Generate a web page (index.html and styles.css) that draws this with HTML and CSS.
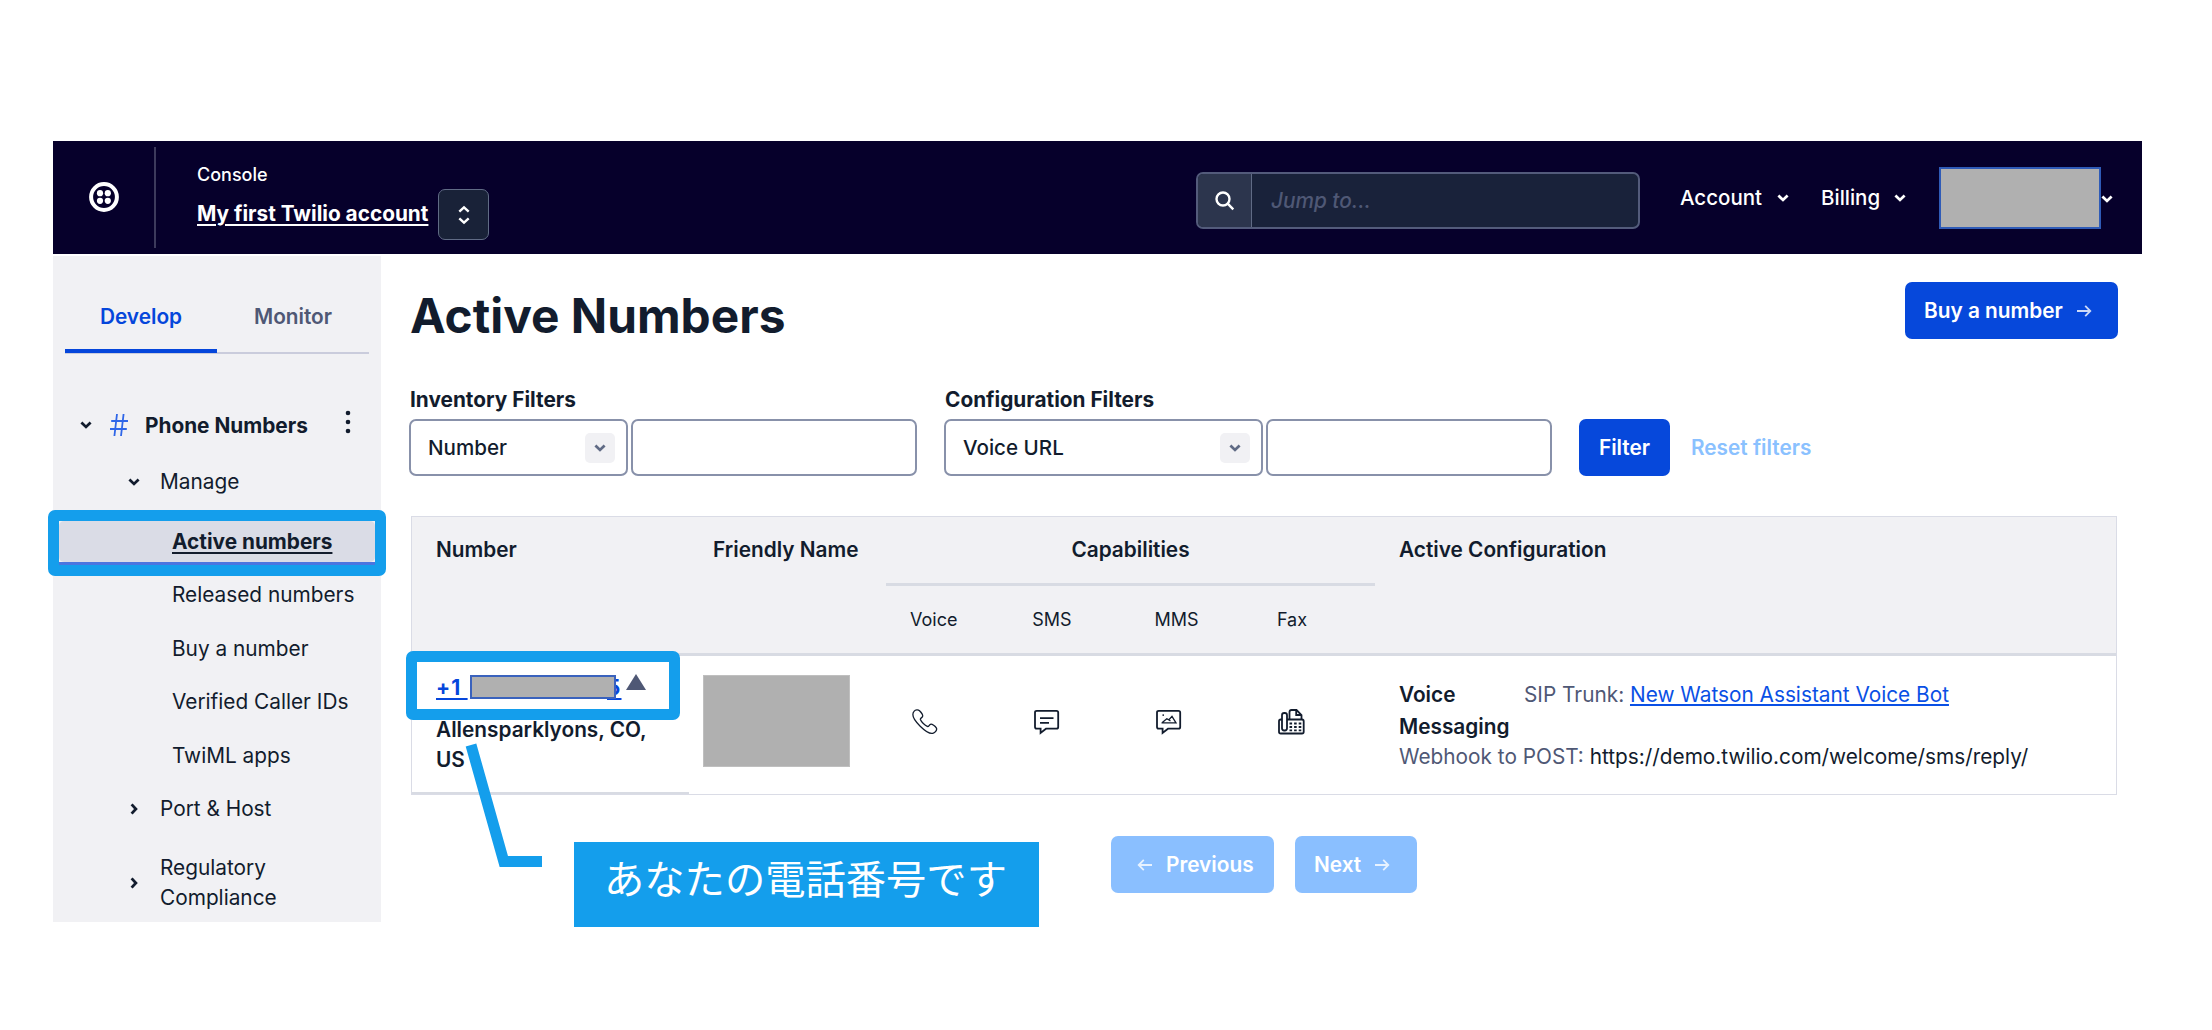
FILE: index.html
```html
<!DOCTYPE html>
<html lang="ja">
<head>
  <meta charset="UTF-8">
  <meta name="viewport" content="width=device-width, initial-scale=1.0">
  <title>Active Numbers</title>
  <link rel="stylesheet" href="styles.css">
</head>
<body>
  <!-- shared chevron and arrow shapes -->
  <svg class="sprite">
    <symbol id="chevron-down" viewBox="0 0 14 14"><path d="M2.4 4.6 L7 8.9 L11.6 4.6"/></symbol>
    <symbol id="chevron-right" viewBox="0 0 14 14"><path d="M4.6 2.4 L8.9 7 L4.6 11.6"/></symbol>
    <symbol id="arrow" viewBox="0 0 16 14"><path d="M1 7 H14 M9.2 1.9 L14.3 7 L9.2 12.1"/></symbol>
  </svg>

  <div class="console">
    <header class="topbar">
      <div class="logo">
        <svg width="30" height="30" viewBox="0 0 30 30">
          <circle cx="15" cy="15" r="12.9" fill="none" stroke="#fff" stroke-width="4"/>
          <g fill="#fff"><circle cx="11" cy="11.2" r="3.1"/><circle cx="18.8" cy="11.2" r="3.1"/><circle cx="11" cy="18.8" r="3.1"/><circle cx="18.8" cy="18.8" r="3.1"/></g>
        </svg>
      </div>
      <div class="account">
        <span class="account-label">Console</span>
        <a class="account-name">My first Twilio account</a>
      </div>
      <button class="switcher">
        <svg width="14" height="20" viewBox="0 0 14 20"><path d="M2.3 6.6 L7 2.4 L11.7 6.6 M2.3 13.4 L7 17.6 L11.7 13.4"/></svg>
      </button>
      <div class="search">
        <div class="search-icon">
          <svg width="20" height="20" viewBox="0 0 20 20"><circle cx="8" cy="8" r="6.5"/><path d="M12.7 12.7 L18.3 18.3"/></svg>
        </div>
        <div class="search-input">Jump to...</div>
      </div>
      <nav class="topnav">
        <a class="topnav-account">Account</a><svg class="chevron"><use href="#chevron-down"/></svg>
        <a class="topnav-billing">Billing</a><svg class="chevron"><use href="#chevron-down"/></svg>
        <div class="user-mask"></div><svg class="chevron user-chevron"><use href="#chevron-down"/></svg>
      </nav>
    </header>

    <div class="body">
      <aside class="sidebar">
        <div class="tabs">
          <div class="tab tab-active"><span>Develop</span></div>
          <div class="tab"><span>Monitor</span></div>
        </div>
        <ul class="menu">
          <li class="menu-product">
            <svg class="chevron"><use href="#chevron-down"/></svg>
            <svg class="hash" width="18" height="22" viewBox="0 0 18 22"><path d="M7 0 L4.4 22 M13.6 0 L11 22 M1.2 7 H18 M0 15 H16.8"/></svg>
            <span class="product-name">Phone Numbers</span>
            <svg class="dots" width="6" height="24" viewBox="0 0 6 24"><circle cx="3" cy="3" r="2.3"/><circle cx="3" cy="12" r="2.3"/><circle cx="3" cy="21" r="2.3"/></svg>
          </li>
          <li class="menu-group menu-manage"><svg class="chevron"><use href="#chevron-down"/></svg><span>Manage</span></li>
          <li class="menu-link menu-current"><span>Active numbers</span></li>
          <li class="menu-link"><span>Released numbers</span></li>
          <li class="menu-link"><span>Buy a number</span></li>
          <li class="menu-link"><span>Verified Caller IDs</span></li>
          <li class="menu-link"><span>TwiML apps</span></li>
          <li class="menu-group menu-port"><svg class="chevron"><use href="#chevron-right"/></svg><span>Port &amp; Host</span></li>
          <li class="menu-group menu-regulatory"><svg class="chevron"><use href="#chevron-right"/></svg><span>Regulatory<br>Compliance</span></li>
        </ul>
      </aside>

      <main class="main">
        <div class="heading">
          <h1>Active Numbers</h1>
          <button class="btn btn-buy">Buy a number <svg class="arrow"><use href="#arrow"/></svg></button>
        </div>

        <div class="filters">
          <div class="filter">
            <label>Inventory Filters</label>
            <div class="filter-fields">
              <div class="select select-inventory">Number <span class="select-arrow"><svg class="chevron"><use href="#chevron-down"/></svg></span></div>
              <input class="input" type="text">
            </div>
          </div>
          <div class="filter">
            <label>Configuration Filters</label>
            <div class="filter-fields">
              <div class="select select-config">Voice URL <span class="select-arrow"><svg class="chevron"><use href="#chevron-down"/></svg></span></div>
              <input class="input" type="text">
            </div>
          </div>
          <button class="btn btn-filter">Filter</button>
          <a class="reset">Reset filters</a>
        </div>

        <div class="table">
          <div class="table-head">
            <div class="th">Number</div>
            <div class="th">Friendly Name</div>
            <div class="capabilities">
              <div class="capabilities-title">Capabilities</div>
              <div class="capabilities-names"><span>Voice</span><span>SMS</span><span>MMS</span><span>Fax</span></div>
            </div>
            <div class="th">Active Configuration</div>
          </div>
          <div class="table-row">
            <div class="cell-number">
              <div class="phone"><a>+1 </a><span class="phone-mask"></span><a class="phone-last">5</a><svg class="triangle" width="20" height="16" viewBox="0 0 20 16"><path d="M10 0 L20 16 H0 Z"/></svg></div>
              <div class="location">Allensparklyons, CO,<br>US</div>
            </div>
            <div class="cell-name"><div class="name-mask"></div></div>
            <div class="cell-icons">
              <svg width="26" height="26" viewBox="0 0 26 26"><path d="M2 2.4 C3.5 .6 6.2 .5 7.5 1.8 C9.3 3.6 11.3 6.3 10.5 7.7 C9.7 9 8 9.2 8.4 10.5 C9.3 13 13 16.3 15.3 17.4 C16.8 18 17 15.9 18.5 15.3 C20 14.7 23.4 17.4 24.3 18.8 C25.5 20.8 23.2 23.6 20.8 24.3 C18 25.1 12.7 21.6 8.2 17.2 C3.7 12.8 .8 8.6 .9 5.6 C.9 4.3 1.2 3.2 2 2.4 Z"/></svg>
              <svg width="26" height="26" viewBox="0 0 26 26"><path class="bold" d="M2.7 1.8 H22.5 Q24.2 1.8 24.2 3.5 V18 Q24.2 19.7 22.5 19.7 H12 L6.6 24 V19.7 H2.7 Q1 19.7 1 18 V3.5 Q1 1.8 2.7 1.8 Z"/><path class="bold" d="M6 9.2 H19.5 M6 13.8 H15"/></svg>
              <svg width="26" height="26" viewBox="0 0 26 26"><path class="bold" d="M2.7 1.8 H22.5 Q24.2 1.8 24.2 3.5 V18 Q24.2 19.7 22.5 19.7 H12 L6.6 24 V19.7 H2.7 Q1 19.7 1 18 V3.5 Q1 1.8 2.7 1.8 Z"/><path d="M5.5 13.8 H20 L16 7.4 L13 10.8 L10.8 9.8 L6.3 13.5 M12.5 10.8 L14.5 12 M7.2 5.2 V7"/></svg>
              <svg width="27" height="26" viewBox="0 0 27 26"><path class="bold" d="M4 10.5 H2.8 Q1 10.5 1 12.3 V22.7 Q1 24.5 2.8 24.5 H24 Q25.7 24.5 25.7 22.7 V12.3 Q25.7 10.5 24 10.5 H9"/><rect class="bold" x="4" y="4" width="5" height="17.5" rx="2.2"/><path class="bold" d="M11.5 10 V3 Q11.5 1 13.5 1 H18.5 L23.5 6 V10 M18.2 1.2 V6 H23.5"/><path class="bold keys" d="M11.5 14.5 H23.5 M11.5 18 H23.5 M11.5 21.4 H23.5"/></svg>
            </div>
            <div class="cell-config">
              <div class="config-voice"><b>Voice</b><span class="muted">SIP Trunk: <a class="trunk">New Watson Assistant Voice Bot</a></span></div>
              <div class="config-messaging"><b>Messaging</b></div>
              <div class="config-webhook"><span class="muted">Webhook to POST:</span> <span class="url">https://demo.twilio.com/welcome/sms/reply/</span></div>
            </div>
          </div>
        </div>

        <div class="pager">
          <button class="btn btn-light btn-prev"><svg class="arrow arrow-left"><use href="#arrow"/></svg> Previous</button>
          <button class="btn btn-light btn-next">Next <svg class="arrow"><use href="#arrow"/></svg></button>
        </div>
      </main>
    </div>

    <!-- annotations on top of the console -->
    <div class="marker marker-menu"></div>
    <div class="marker marker-number"></div>
    <svg class="callout-line" width="84" height="132" viewBox="0 0 84 132"><path d="M11 5 L43.8 121.5 H82"/></svg>
    <div class="callout">あなたの電話番号です</div>
  </div>
</body>
</html>
```
FILE: styles.css
```css
* {
  box-sizing: border-box;
}

body {
  margin: 0;
  height: 1030px;
  overflow: hidden;
  background: #fff;
  color: #121c2d;
  font-family: Inter, "Liberation Sans", sans-serif;
  font-size: 20.8px;
}

button {
  font-family: inherit;
  font-size: inherit;
  margin: 0;
  padding: 0;
}

.sprite {
  display: none;
}

.console {
  position: relative;
  width: 2089px;
  margin: 141px 0 0 53px;
}

.chevron {
  width: 14px;
  height: 14px;
  fill: none;
  stroke: currentColor;
  stroke-width: 2.8;
  flex: none;
}

.arrow {
  width: 16px;
  height: 14px;
  fill: none;
  stroke: currentColor;
  stroke-width: 1.8;
  opacity: .8;
}

.arrow-left {
  transform: scaleX(-1);
}

/* top bar */
.topbar {
  display: flex;
  height: 113px;
  background: #06002b;
  color: #fff;
}

.logo {
  width: 103px;
  height: 101px;
  margin-top: 6px;
  padding: 35px 0 0 36px;
  border-right: 2px solid #3c3a5c;
}

.account {
  width: 241px;
  margin-left: 41px;
  padding-top: 22px;
  display: flex;
  flex-direction: column;
  align-items: flex-start;
}

.account-label {
  font-size: 18px;
  line-height: 24px;
  font-weight: 500;
}

.account-name {
  margin-top: 13px;
  line-height: 28px;
  font-weight: 700;
  white-space: nowrap;
  text-decoration: underline;
  text-decoration-thickness: 1.5px;
  text-underline-offset: 3px;
}

.switcher {
  display: flex;
  align-items: center;
  justify-content: center;
  width: 51px;
  height: 51px;
  margin-top: 48px;
  border: 1.5px solid #606b85;
  border-radius: 7px;
  background: #192238;
}

.switcher svg {
  fill: none;
  stroke: #fff;
  stroke-width: 2.4;
}

.search {
  display: flex;
  width: 444px;
  height: 57px;
  margin: 31px 0 0 707px;
  border: 2px solid #535b7b;
  border-radius: 7px;
  background: #19223a;
  overflow: hidden;
}

.search-icon {
  display: flex;
  align-items: center;
  justify-content: center;
  width: 54px;
  background: #2c354d;
  border-right: 1.5px solid #606b85;
}

.search-icon svg {
  fill: none;
  stroke: #fff;
  stroke-width: 2.4;
}

.search-input {
  padding-left: 19px;
  line-height: 54px;
  font-style: italic;
  font-weight: 500;
  color: #4f5875;
}

.topnav {
  display: flex;
  align-items: center;
  margin-left: 40px;
  height: 113px;
  font-size: 20.5px;
  font-weight: 500;
}

.topnav a {
  line-height: 28px;
}

.topnav-account {
  width: 96px;
}

.topnav-billing {
  width: 72px;
  margin-left: 31px;
}

.user-mask {
  width: 162px;
  height: 62px;
  margin: 1px 0 0 32px;
  border: 2px solid #2f5bb7;
  background: #b0b0b0;
}

.user-chevron {
  margin: 3px 0 0 -1px;
}

/* sidebar */
.body {
  display: flex;
  margin-top: 2px;
}

.sidebar {
  width: 328px;
  height: 666px;
  padding: 0 12px;
  background: #f1f1f4;
}

.tabs {
  display: flex;
  height: 98px;
  border-bottom: 2px solid #caccdc;
}

.tab {
  display: flex;
  justify-content: center;
  width: 152px;
  height: 97px;
  padding-top: 47px;
  line-height: 28px;
  font-weight: 600;
  color: #4f5875;
}

.tab-active {
  color: #0546db;
  border-bottom: 4px solid #0546db;
}

.menu {
  list-style: none;
  margin: 0;
  padding: 0;
}

.menu li {
  display: flex;
  align-items: center;
}

.menu-product {
  height: 56px;
  margin-top: 43px;
  padding-left: 14px;
  font-weight: 700;
}

.hash {
  margin-left: 17px;
  fill: none;
  stroke: #2f66e8;
  stroke-width: 1.8;
}

.product-name {
  width: 200px;
  margin-left: 17px;
}

.menu-group {
  height: 56px;
  padding-left: 62px;
  line-height: 30px;
}

.menu-group .chevron {
  margin-right: 19px;
}

.menu-manage {
  height: 58px;
}

.dots {
  margin-top: -6px;
  fill: #121c2d;
}

.menu-link {
  height: 53.5px;
  padding-left: 107px;
}

.menu-current {
  height: 41px;
  margin: 10px -6px 6px -6px;
  padding-left: 113px;
  background: #dadce6;
  border-radius: 5px;
}

.menu-current span {
  font-weight: 700;
  text-decoration: underline;
  text-decoration-thickness: 2px;
  text-underline-offset: 3px;
}

.menu-port {
  height: 53px;
}

.menu-regulatory {
  height: 96px;
}

/* main column */
.main {
  width: 1737px;
  padding-left: 28px;
}

.heading {
  display: flex;
  justify-content: space-between;
  width: 1709px;
  height: 83px;
  padding-top: 26px;
}

h1 {
  margin: 5px 0 0 1px;
  line-height: 58px;
  font-size: 47.8px;
  font-weight: 700;
}

.btn {
  display: flex;
  align-items: center;
  height: 57px;
  border: 0;
  border-radius: 7px;
  background: #0648db;
  color: #fff;
  font-weight: 600;
  white-space: nowrap;
}

.btn-buy {
  width: 213px;
  padding-left: 19px;
  gap: 13px;
}

.filters {
  display: flex;
  align-items: flex-end;
  height: 137px;
}

.filter {
  margin-right: 27px;
}

.filter label {
  display: block;
  margin: 0 0 5px 1px;
  line-height: 28px;
  font-weight: 700;
}

.filter-fields {
  display: flex;
  gap: 3px;
}

.select {
  display: flex;
  align-items: center;
  justify-content: space-between;
  height: 57px;
  padding: 0 11px 0 17px;
  border: 2px solid #8891aa;
  border-radius: 7px;
  font-size: 20.6px;
  font-weight: 500;
}

.select-inventory {
  width: 219px;
}

.select-config {
  width: 319px;
}

.select-arrow {
  display: flex;
  align-items: center;
  justify-content: center;
  width: 30px;
  height: 30px;
  border-radius: 5px;
  background: #f1f1f4;
  color: #606b85;
}

.input {
  width: 286px;
  height: 57px;
  border: 2px solid #8891aa;
  border-radius: 7px;
}

.btn-filter {
  width: 91px;
  justify-content: center;
}

.reset {
  margin-left: 21px;
  line-height: 57px;
  font-weight: 600;
  color: #8ac1ff;
}

/* numbers table */
.table {
  width: 1706px;
  margin: 40px 0 0 2px;
  border: 1.5px solid #dadce6;
}

.table-head,
.table-row {
  display: grid;
  grid-template-columns: 277px 197px 489px 1fr;
}

.table-head {
  height: 139px;
  border-bottom: 3px solid #d8dbe3;
  background: #f1f1f4;
}

.th {
  padding: 18px 0 0 24px;
  line-height: 29px;
  font-weight: 600;
}

.capabilities-title {
  height: 69px;
  padding-top: 18px;
  line-height: 29px;
  font-weight: 600;
  text-align: center;
  border-bottom: 3px solid #d8dbe3;
}

.capabilities-names {
  display: grid;
  grid-template-columns: repeat(4, 122.3px);
  padding: 21px 0 0 24px;
  line-height: 26px;
  font-size: 18px;
}

.table-row {
  height: 138px;
}

.cell-number {
  padding: 18px 0 0 24px;
  border-bottom: 2px solid #d8dbe3;
  font-weight: 600;
}

.phone {
  display: flex;
  height: 28px;
  line-height: 28px;
}

.phone a {
  width: 34px;
  color: #0546db;
  font-weight: 700;
  letter-spacing: 1.2px;
  white-space: pre;
  text-decoration: underline;
  text-decoration-thickness: 2px;
  text-underline-offset: 3px;
}

.phone-mask {
  position: relative;
  width: 146px;
  height: 24px;
  margin-top: 1px;
  border: 2px solid #3a62bd;
  background: #b0b0b0;
}

.phone .phone-last {
  width: 14px;
  margin-left: -9px;
}

.triangle {
  margin-left: 5px;
  fill: #4f5875;
}

.location {
  margin-top: 13px;
  line-height: 29.5px;
}

.cell-name {
  padding: 19px 0 0 14px;
}

.name-mask {
  width: 147px;
  height: 92px;
  border: 1px solid #bfbfbf;
  background: #b0b0b0;
}

.cell-icons {
  display: grid;
  grid-template-columns: repeat(4, 122.1px);
  padding: 53px 0 0 26px;
}

.cell-icons svg {
  fill: none;
  stroke: #121c2d;
  stroke-width: 1.3;
}

.cell-icons .bold {
  stroke-width: 1.8;
}

.cell-icons .keys {
  stroke-dasharray: 2.6 2;
}

.cell-config {
  padding: 23px 0 0 24px;
}

.cell-config b {
  font-weight: 600;
}

.muted {
  color: #4f5875;
}

.config-voice {
  display: flex;
  line-height: 31px;
}

.config-voice b {
  width: 125px;
}

.trunk {
  color: #0a50e5;
  text-decoration: underline;
  text-decoration-thickness: 2px;
  text-underline-offset: 2px;
}

.config-messaging {
  line-height: 33px;
}

.config-webhook {
  line-height: 28px;
}

.pager {
  display: flex;
  gap: 21px;
  margin: 41px 0 0 702px;
}

.btn-light {
  background: #8abfff;
}

.btn-prev {
  width: 163px;
  padding-left: 26px;
  gap: 13px;
}

.btn-next {
  width: 122px;
  padding-left: 19px;
  gap: 13px;
}

/* annotations */
.marker {
  position: absolute;
  border: 11px solid #149eec;
  border-radius: 7px;
}

.marker-menu {
  left: -5px;
  top: 369px;
  width: 338px;
  height: 66px;
  box-shadow: inset 0 -3px 0 #4a75e0;
}

.marker-number {
  left: 353px;
  top: 510px;
  width: 274px;
  height: 69px;
}

.callout-line {
  position: absolute;
  left: 407px;
  top: 599px;
  fill: none;
  stroke: #149eec;
  stroke-width: 11;
}

.callout {
  position: absolute;
  left: 521px;
  top: 701px;
  width: 465px;
  height: 85px;
  padding-left: 30px;
  background: #149eec;
  color: #fff;
  font-family: "Noto Sans CJK JP", sans-serif;
  font-size: 40.3px;
  line-height: 70px;
  white-space: nowrap;
}
```
